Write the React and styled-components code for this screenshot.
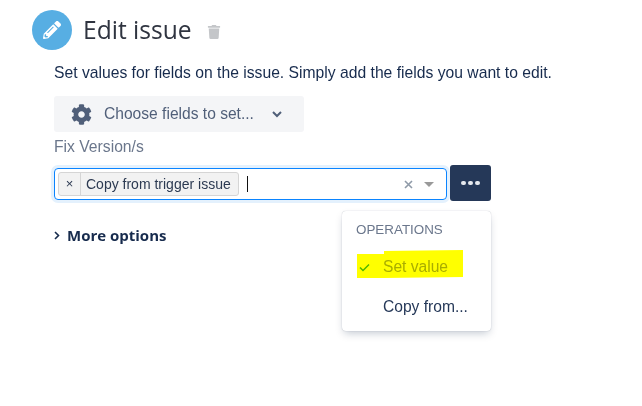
import React from 'react'
import styled, { createGlobalStyle } from 'styled-components'
import { FaPencilAlt, FaTrash, FaCog } from 'react-icons/fa'

const Global = createGlobalStyle`
  html, body { margin: 0; padding: 0; background: #fff; }
  body { font-family: "Liberation Sans", Arial, sans-serif; }
`

const Page = styled.div`
  position: relative;
  width: 642px;
  height: 406px;
  overflow: hidden;
  padding: 10px 0 0 32px;
  box-sizing: border-box;
`

const Header = styled.div`
  display: flex;
  align-items: center;
  height: 40px;
`

const Badge = styled.div`
  width: 40px;
  height: 40px;
  border-radius: 50%;
  background: #57aee3;
  color: #fff;
  display: flex;
  align-items: center;
  justify-content: center;
  font-size: 18px;
`

const Title = styled.h1`
  margin: 0 0 0 11px;
  font-family: "Open Sans", sans-serif;
  font-size: 24.6px;
  font-weight: 400;
  color: #2f3440;
  line-height: 40px;
`

const Trash = styled.span`
  display: flex;
  margin: 4px 0 0 15px;
  color: #c4c6c9;
  font-size: 14px;
`

const Body = styled.div`
  padding-left: 22px;
`

const Description = styled.p`
  margin: 6px 0 0;
  font-size: 15.7px;
  line-height: 33px;
  height: 40px;
  color: #172b4d;
  white-space: nowrap;
`

const ChooseButton = styled.div`
  width: 250px;
  height: 36px;
  border-radius: 3px;
  background: #f4f5f7;
  display: flex;
  align-items: center;
  padding-left: 17px;
  box-sizing: border-box;
  color: #505f79;
  font-size: 15.6px;
`

const ChooseLabel = styled.span`
  margin: 0 18px 0 12px;
`

const FieldLabel = styled.label`
  display: block;
  margin-top: 6px;
  font-size: 15.7px;
  line-height: 18px;
  color: #6b778c;
`

const FieldRow = styled.div`
  display: flex;
  align-items: flex-start;
  gap: 3px;
  margin-top: 9px;
`

const Select = styled.div`
  width: 393px;
  height: 32px;
  margin-top: 3px;
  box-sizing: border-box;
  border: 1px solid #0a84ff;
  border-radius: 4px;
  box-shadow: 0 0 0 3px #e4f1fd;
  display: flex;
  align-items: center;
  padding: 0 12px 0 3px;
`

const Tag = styled.div`
  display: flex;
  height: 24px;
  box-sizing: border-box;
  border: 1px solid #d5d5d5;
  border-radius: 3px;
  background: #f2f2f2;
  font-size: 14px;
  line-height: 22px;
  color: #2c3a52;
`

const TagRemove = styled.span`
  width: 21px;
  text-align: center;
  border-right: 1px solid #d5d5d5;
  font-size: 13px;
`

const TagLabel = styled.span`
  padding: 0 7px 0 5px;
`

const Caret = styled.span`
  width: 1px;
  height: 16px;
  margin-left: 8px;
  background: #111;
`

const Spacer = styled.span`
  flex: 1;
`

const ClearIcon = styled.svg`
  width: 9px;
  height: 9px;
  margin-right: 11px;
  stroke: #8f9aa8;
  stroke-width: 1.6;
`

const ArrowDown = styled.span`
  width: 0;
  height: 0;
  border-left: 5px solid transparent;
  border-right: 5px solid transparent;
  border-top: 5px solid #999;
`

const MoreButton = styled.div`
  width: 41px;
  height: 36px;
  border-radius: 3px;
  background: #253858;
  display: flex;
  align-items: center;
  justify-content: center;
  gap: 2.5px;
`

const Dot = styled.span`
  width: 4.5px;
  height: 4.5px;
  border-radius: 50%;
  background: #e6e9ee;
`

const MoreOptions = styled.div`
  display: flex;
  align-items: center;
  gap: 7px;
  margin-top: 24px;
  font-family: "Open Sans", sans-serif;
  font-size: 15px;
  font-weight: 700;
  line-height: 20px;
  color: #172b4d;
`

const Chevron = styled.svg`
  width: 6px;
  height: 9px;
  fill: none;
  stroke: #172b4d;
  stroke-width: 1.6;
`

const Menu = styled.div`
  position: absolute;
  left: 342px;
  top: 211px;
  width: 149px;
  height: 120px;
  box-sizing: border-box;
  padding-top: 10px;
  border-radius: 4px;
  background: #fff;
  box-shadow: 0 4px 8px -2px rgba(9, 30, 66, 0.25), 0 0 1px rgba(9, 30, 66, 0.31);
`

const MenuHeading = styled.div`
  padding-left: 14px;
  font-size: 13.4px;
  line-height: 18px;
  color: #6b778c;
`

const MenuItem = styled.div`
  display: flex;
  align-items: center;
  height: 40px;
  padding-left: 17px;
  font-size: 15.6px;
  color: ${(p) => (p.$marked ? '#a9ad2c' : '#253858')};
`

const MenuItemsWrap = styled.div`
  margin-top: 8px;
`

const Check = styled.svg`
  width: 11px;
  height: 9px;
  margin-right: 13px;
  fill: none;
  stroke: #4fb82a;
  stroke-width: 1.5;
`

const Blank = styled.span`
  width: 24px;
`

const Highlight = styled.svg`
  position: absolute;
  left: 357px;
  top: 250px;
  width: 107px;
  height: 29px;
  fill: #ffff00;
  mix-blend-mode: multiply;
`

const App = () => (
  <Page>
    <Global />
    <Header>
      <Badge><FaPencilAlt /></Badge>
      <Title>Edit issue</Title>
      <Trash><FaTrash /></Trash>
    </Header>
    <Body>
      <Description>Set values for fields on the issue. Simply add the fields you want to edit.</Description>
      <ChooseButton>
        <FaCog size={21} />
        <ChooseLabel>Choose fields to set...</ChooseLabel>
        <svg width="10" height="7" viewBox="0 0 10 7" fill="none" stroke="#505f79" strokeWidth="2"><path d="M1 1l4 4 4-4" /></svg>
      </ChooseButton>
      <FieldLabel>Fix Version/s</FieldLabel>
      <FieldRow>
        <Select>
          <Tag>
            <TagRemove>×</TagRemove>
            <TagLabel>Copy from trigger issue</TagLabel>
          </Tag>
          <Caret />
          <Spacer />
          <ClearIcon viewBox="0 0 9 9"><path d="M1 1l7 7M8 1l-7 7" /></ClearIcon>
          <ArrowDown />
        </Select>
        <MoreButton><Dot /><Dot /><Dot /></MoreButton>
      </FieldRow>
      <MoreOptions>
        <Chevron viewBox="0 0 6 9"><path d="M1 1l3.5 3.5L1 8" /></Chevron>
        More options
      </MoreOptions>
    </Body>
    <Menu>
      <MenuHeading>OPERATIONS</MenuHeading>
      <MenuItemsWrap>
        <MenuItem $marked>
          <Check viewBox="0 0 11 9"><path d="M1 4.5l3 3L10 1.5" /></Check>
          Set value
        </MenuItem>
        <MenuItem><Blank />Copy from...</MenuItem>
      </MenuItemsWrap>
    </Menu>
    <Highlight viewBox="0 0 107 29"><path d="M0 4H27V1L106 0V27L27 28H0Z" /></Highlight>
  </Page>
)

export default App
